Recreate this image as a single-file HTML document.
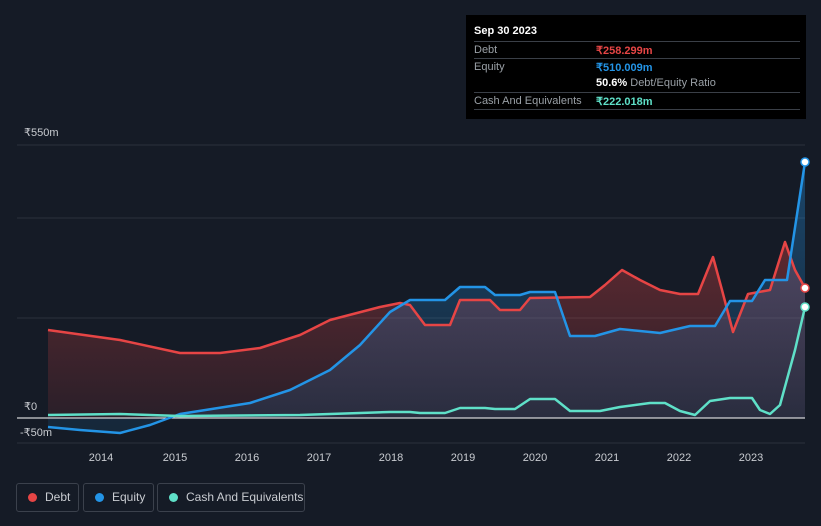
<!DOCTYPE html>
<html><head><meta charset="utf-8"><style>
body{margin:0;width:821px;height:526px;background:#151b26;font-family:"Liberation Sans",sans-serif;overflow:hidden;position:relative}
.tip{position:absolute;left:466px;top:15px;width:340px;height:104px;background:#000;color:#fff;font-size:11px}
.row{position:absolute;left:8px;width:326px;border-top:1px solid #3a3f47;height:16px}
.lab{position:absolute;left:0;top:2px;color:#9aa0a6}
.val{position:absolute;left:122px;top:2px;font-weight:bold}
.leg{position:absolute;top:483px;height:27px;border:1px solid #3b414c;border-radius:3px;color:#c9ccd1;font-size:12px;line-height:27px}
.dot{position:absolute;left:11px;top:9px;width:9px;height:9px;border-radius:50%}
.ax{position:absolute;color:#c9ccd1;font-size:11px}
</style></head><body>
<div class="tip">
<div style="position:absolute;left:8px;top:10px;font-weight:bold;font-size:11px">Sep 30 2023</div>
<div class="row" style="top:26px"><span class="lab">Debt</span><span class="val" style="color:#e64545">₹258.299m</span></div>
<div class="row" style="top:43px"><span class="lab">Equity</span><span class="val" style="color:#2394e6">₹510.009m</span></div>
<div class="row" style="top:60px;border-top:none"><span class="val" style="color:#fff">50.6% <span style="font-weight:normal;color:#9aa0a6">Debt/Equity Ratio</span></span></div>
<div class="row" style="top:77px"><span class="lab">Cash And Equivalents</span><span class="val" style="color:#5fe0c8">₹222.018m</span></div>
<div class="row" style="top:94px"></div>
</div>
<div class="ax" style="left:24px;top:126px">₹550m</div>
<div class="ax" style="left:24px;top:400px">₹0</div>
<div class="ax" style="left:20px;top:426px">-₹50m</div>
<svg width="821" height="526" style="position:absolute;left:0;top:0">
<defs>
<linearGradient id="gd" x1="0" y1="0" x2="0" y2="1"><stop offset="0" stop-color="#e64545" stop-opacity=".35"/><stop offset="1" stop-color="#e64545" stop-opacity=".1"/></linearGradient>
<linearGradient id="ge" x1="0" y1="0" x2="0" y2="1"><stop offset="0" stop-color="#2394e6" stop-opacity=".35"/><stop offset="1" stop-color="#2394e6" stop-opacity=".1"/></linearGradient>
</defs>
<line x1="17" y1="145" x2="805" y2="145" stroke="#2c323c"/>
<line x1="17" y1="218" x2="805" y2="218" stroke="#2c323c"/>
<line x1="17" y1="318" x2="805" y2="318" stroke="#2c323c"/>
<line x1="17" y1="443" x2="805" y2="443" stroke="#2c323c"/>
<path d="M48 418 L48 330 L120 340 L180 353 L220 353 L260 348 L300 335 L330 320 L380 307 L400 303 L410 305 L425 325 L450 325 L460 300 L490 300 L500 310 L520 310 L530 298 L590 297 L605 285 L622 270 L640 280 L660 290 L680 294 L698 294 L713 257 L722 290 L733 332 L748 294 L770 290 L785 242 L795 270 L805 288 L805 418 Z" fill="url(#gd)"/>
<path d="M48 418 L48 427 L80 430 L120 433 L150 425 L180 414 L250 403 L290 390 L330 370 L360 345 L390 312 L410 300 L445 300 L460 287 L485 287 L495 295 L520 295 L530 292 L555 292 L570 336 L595 336 L620 329 L660 333 L690 326 L715 326 L730 301 L752 301 L765 280 L787 280 L805 162 L805 418 Z" fill="url(#ge)"/>
<line x1="17" y1="418" x2="805" y2="418" stroke="#fff" stroke-width="1"/>
<polyline fill="none" stroke="#e64545" stroke-width="2.5" stroke-linejoin="round" points="48,330 120,340 180,353 220,353 260,348 300,335 330,320 380,307 400,303 410,305 425,325 450,325 460,300 490,300 500,310 520,310 530,298 590,297 605,285 622,270 640,280 660,290 680,294 698,294 713,257 722,290 733,332 748,294 770,290 785,242 795,270 805,288"/>
<polyline fill="none" stroke="#2394e6" stroke-width="2.5" stroke-linejoin="round" points="48,427 80,430 120,433 150,425 180,414 250,403 290,390 330,370 360,345 390,312 410,300 445,300 460,287 485,287 495,295 520,295 530,292 555,292 570,336 595,336 620,329 660,333 690,326 715,326 730,301 752,301 765,280 787,280 805,162"/>
<polyline fill="none" stroke="#5fe0c8" stroke-width="2.5" stroke-linejoin="round" points="48,415 120,414 180,416 300,415 360,413 390,412 410,412 420,413 445,413 460,408 485,408 495,409 515,409 530,399 555,399 570,411 600,411 620,407 650,403 665,403 680,411 695,415 710,401 730,398 752,398 760,410 770,414 780,405 795,350 805,307"/>
<circle cx="805" cy="288" r="4" fill="#fff" stroke="#e64545" stroke-width="1.5"/>
<circle cx="805" cy="162" r="4" fill="#fff" stroke="#2394e6" stroke-width="1.5"/>
<circle cx="805" cy="307" r="4" fill="#fff" stroke="#5fe0c8" stroke-width="1.5"/>
<g fill="#c9ccd1" font-size="11" text-anchor="middle" font-family="Liberation Sans,sans-serif">
<text x="101" y="461">2014</text><text x="175" y="461">2015</text><text x="247" y="461">2016</text><text x="319" y="461">2017</text><text x="391" y="461">2018</text><text x="463" y="461">2019</text><text x="535" y="461">2020</text><text x="607" y="461">2021</text><text x="679" y="461">2022</text><text x="751" y="461">2023</text>
</g>
</svg>
<div class="leg" style="left:16px;width:61px"><span class="dot" style="background:#e64545"></span><span style="position:absolute;left:28px">Debt</span></div>
<div class="leg" style="left:83px;width:69px"><span class="dot" style="background:#2394e6"></span><span style="position:absolute;left:28px">Equity</span></div>
<div class="leg" style="left:157px;width:146px"><span class="dot" style="background:#5fe0c8"></span><span style="position:absolute;left:28px">Cash And Equivalents</span></div>
</body></html>
